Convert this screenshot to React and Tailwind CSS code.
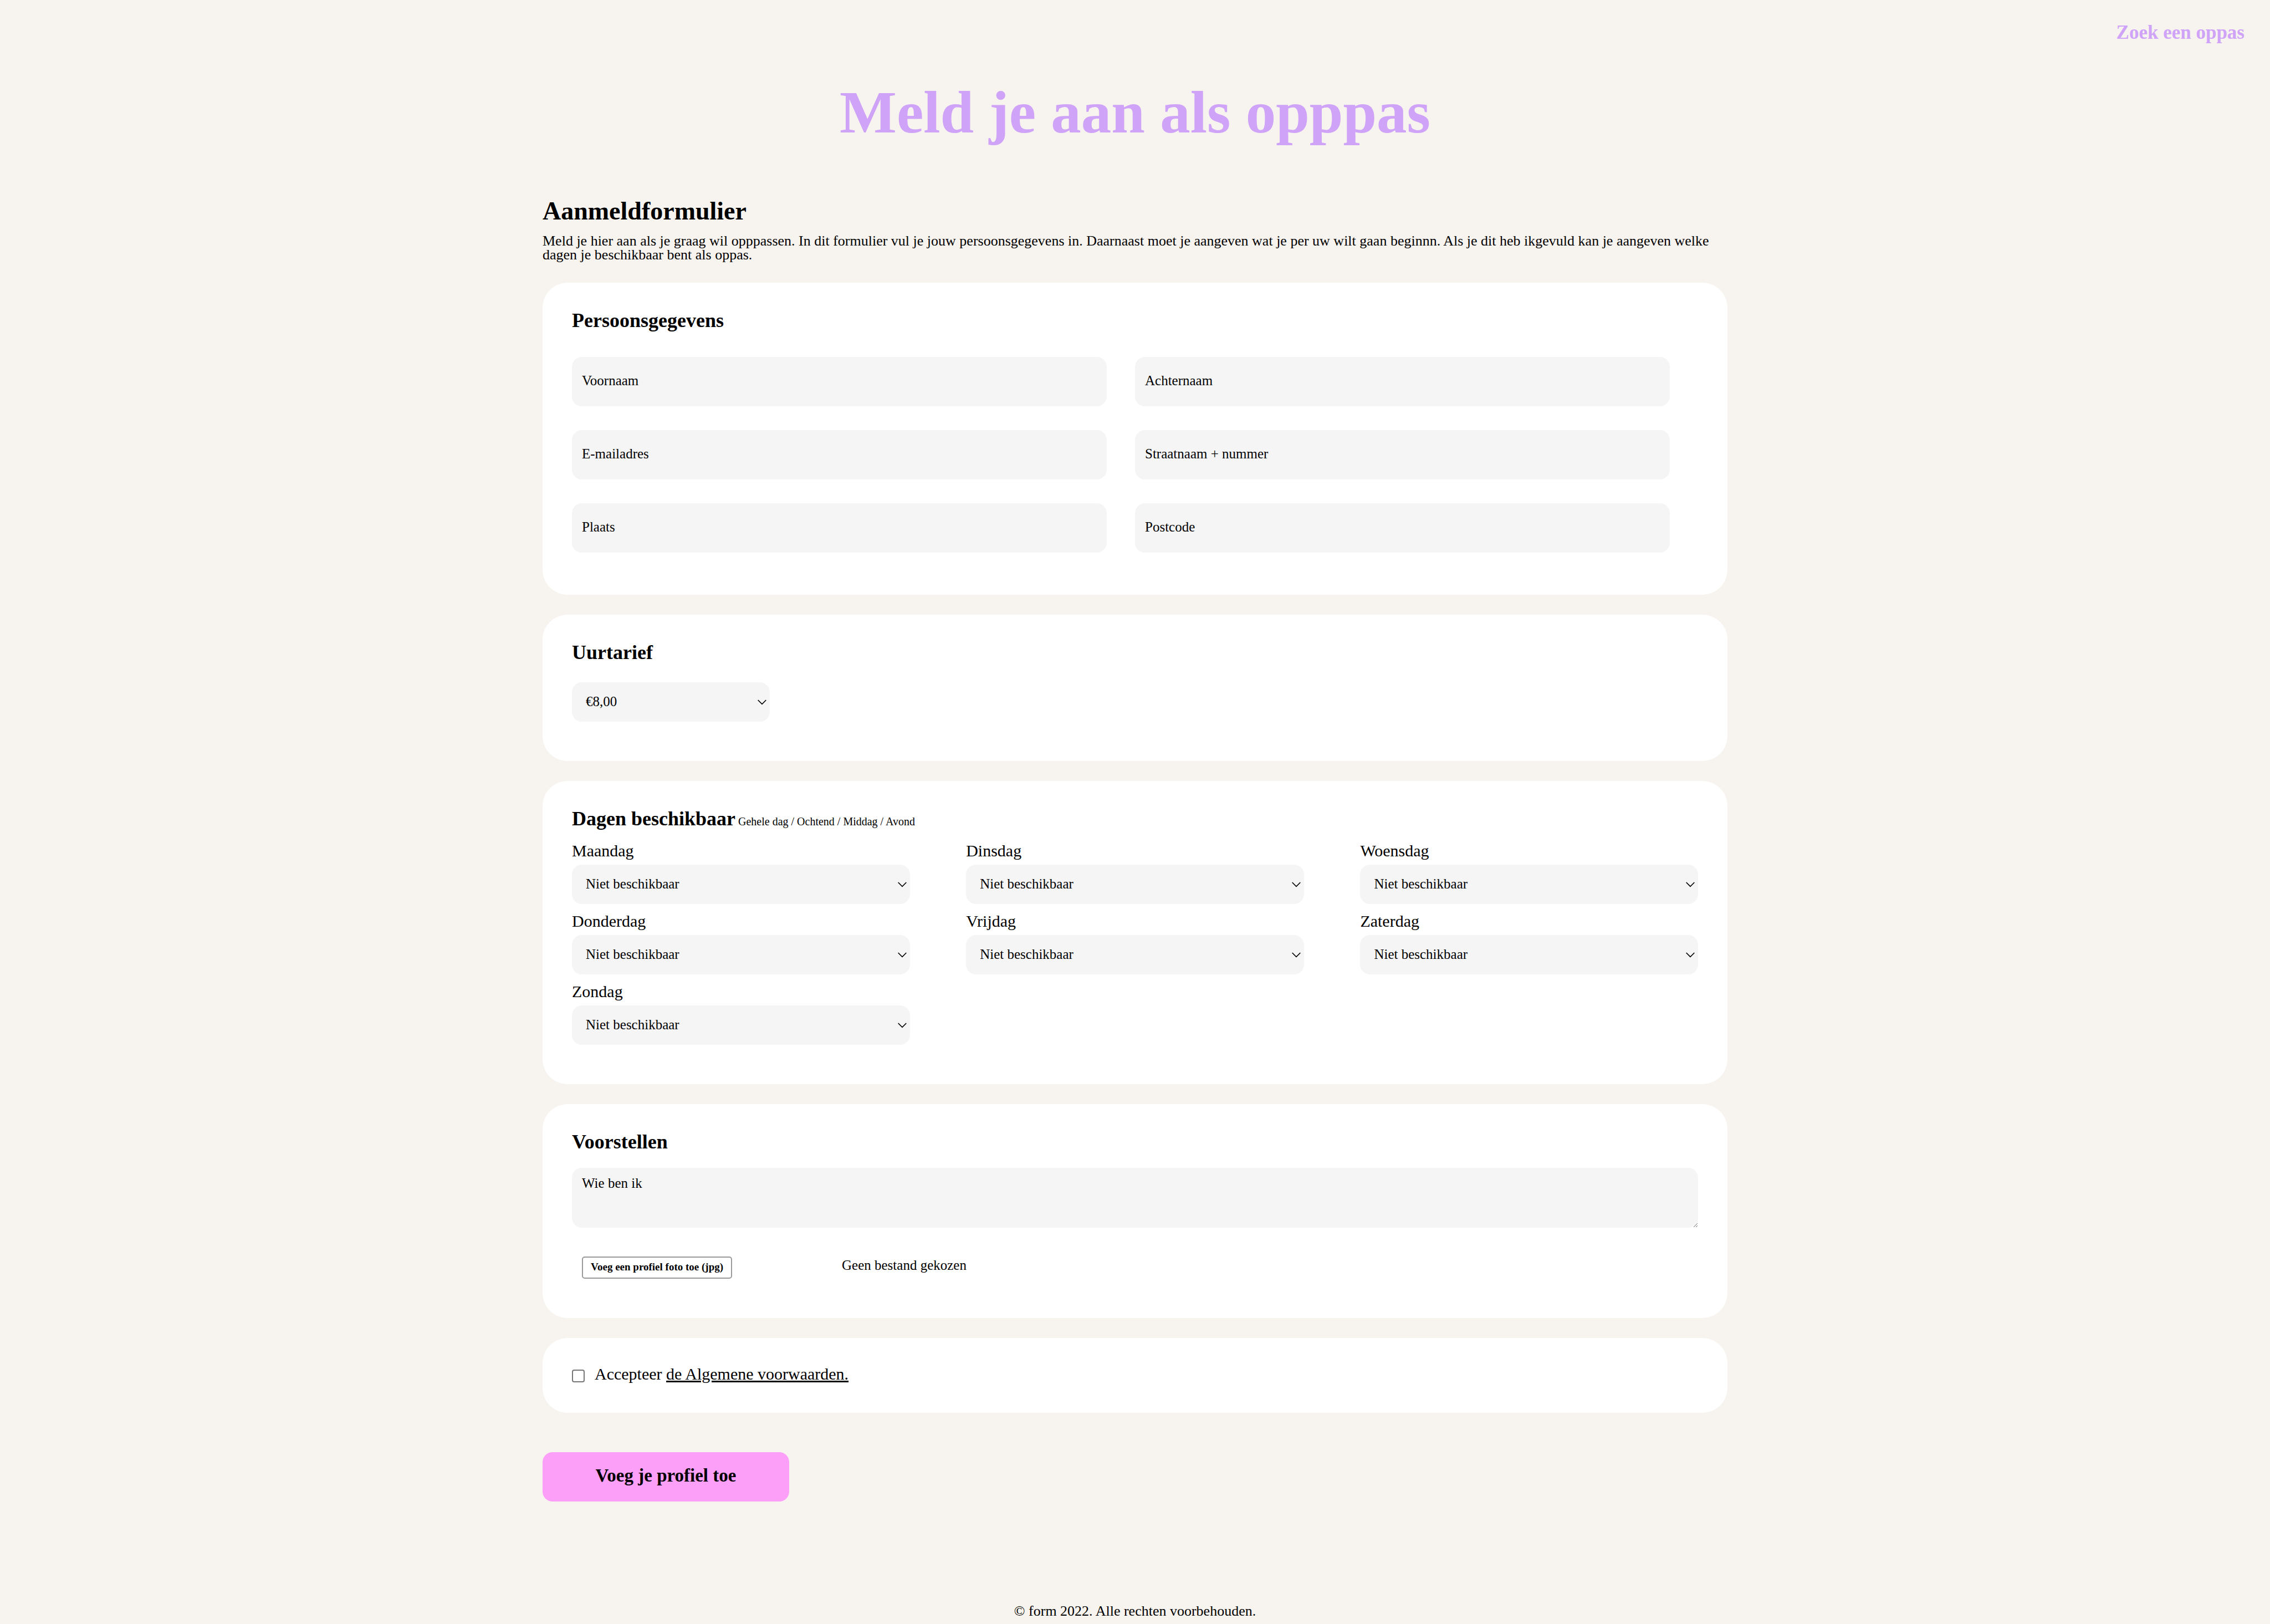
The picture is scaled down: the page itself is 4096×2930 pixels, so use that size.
import React from "react";

const personalFields = [
  { id: "voornaam", label: "Voornaam", type: "text" },
  { id: "achternaam", label: "Achternaam", type: "text" },
  { id: "email", label: "E-mailadres", type: "email" },
  { id: "straat", label: "Straatnaam + nummer", type: "text" },
  { id: "plaats", label: "Plaats", type: "text" },
  { id: "postcode", label: "Postcode", type: "text" },
];

const days = ["Maandag", "Dinsdag", "Woensdag", "Donderdag", "Vrijdag", "Zaterdag", "Zondag"];
const availability = ["Niet beschikbaar", "Gehele dag", "Ochtend", "Middag", "Avond"];
const rates = ["€8,00", "€9,00", "€10,00", "€11,00", "€12,00"];

function Card({ children, className = "pt-12 pb-[71px]" }) {
  return <section className={`rounded-[45px] bg-white px-[53px] ${className}`}>{children}</section>;
}

function CardTitle({ children }) {
  return <h3 className="text-[36px] leading-10 font-bold">{children}</h3>;
}

function Select({ id, options, ...rest }) {
  return (
    <div className="relative w-full">
      <select
        id={id}
        className="block h-[71px] w-full appearance-none rounded-[18px] bg-[#f5f5f5] pr-10 pb-[2px] pl-[25px] text-[25px]"
        {...rest}
      >
        {options.map((option) => (
          <option key={option}>{option}</option>
        ))}
      </select>
      <svg
        viewBox="0 0 16 10"
        className="pointer-events-none absolute top-[31px] right-[6px] h-[10px] w-4"
        fill="none"
        stroke="currentColor"
        strokeWidth="1.7"
        aria-hidden="true"
      >
        <path d="M0.7 1l7.3 7.3L15.3 1" />
      </svg>
    </div>
  );
}

export default function App() {
  return (
    <div className="flex min-h-screen flex-col bg-[#f7f3ee] font-['Liberation_Serif',serif] text-black">
      <nav className="flex justify-end pt-[39px] pr-[46px]">
        <a href="#zoeken" className="text-[35px] leading-10 font-bold text-[#cfa3f7]">
          Zoek een oppas
        </a>
      </nav>

      <h1 className="mt-[69px] text-center text-[109px] leading-[110px] font-bold text-[#cfa3f7]">
        Meld je aan als opppas
      </h1>

      <main className="mx-auto mt-[100px] w-full max-w-[2138px]">
        <h2 className="text-[46px] leading-[46px] font-bold">Aanmeldformulier</h2>
        <p className="mt-[18px] text-[26px] leading-[25px]">
          Meld je hier aan als je graag wil opppassen. In dit formulier vul je jouw persoonsgegevens in. Daarnaast moet
          je aangeven wat je per uw wilt gaan beginnn. Als je dit heb ikgevuld kan je aangeven welke dagen je
          beschikbaar bent als oppas.
        </p>

        <form className="mt-[38px]" onSubmit={(event) => event.preventDefault()}>
          <div className="flex flex-col gap-9">
            <Card className="pt-12 pb-[76px]">
              <CardTitle>Persoonsgegevens</CardTitle>
              <div className="mt-[46px] grid grid-cols-2 gap-y-[43px]">
                {personalFields.map(({ id, label, type }) => (
                  <input
                    key={id}
                    id={id}
                    type={type}
                    aria-label={label}
                    placeholder={label}
                    className="h-[89px] w-[95%] rounded-[18px] bg-[#f5f5f5] px-[18px] pb-1 text-[25px] placeholder:text-black"
                  />
                ))}
              </div>
            </Card>

            <Card>
              <CardTitle>Uurtarief</CardTitle>
              <div className="mt-[34px] w-[357px]">
                <Select id="uurtarief" options={rates} aria-label="Uurtarief" />
              </div>
            </Card>

            <Card>
              <CardTitle>
                Dagen beschikbaar
                <small className="text-[20px] leading-none font-normal"> Gehele dag / Ochtend / Middag / Avond</small>
              </CardTitle>
              <div className="mt-[23px] grid grid-cols-3 gap-x-[5%] gap-y-4">
                {days.map((day) => (
                  <div key={day} className="flex flex-col gap-[10px]">
                    <label htmlFor={day} className="text-[30px] leading-[30px]">
                      {day}
                    </label>
                    <Select id={day} options={availability} />
                  </div>
                ))}
              </div>
            </Card>

            <Card>
              <CardTitle>Voorstellen</CardTitle>
              <textarea
                aria-label="Wie ben ik"
                placeholder="Wie ben ik"
                className="mt-[27px] block h-[108px] w-full rounded-[18px] bg-[#f5f5f5] px-[18px] pt-[14px] text-[25px] leading-7 placeholder:text-black"
              />
              <div className="mt-[52px] flex items-center gap-[198px] pl-[18px]">
                <label
                  htmlFor="foto"
                  className="flex h-10 cursor-pointer items-center rounded-[5px] border-2 border-[#999] px-[14px] pb-[2px] text-[19px] font-bold"
                >
                  Voeg een profiel foto toe (jpg)
                </label>
                <input id="foto" type="file" accept="image/jpeg" className="sr-only" />
                <span className="pb-2 text-[25px] leading-8">Geen bestand gekozen</span>
              </div>
            </Card>

            <Card className="pt-[50px] pb-[55px]">
              <div className="flex items-end gap-[18px] text-[30px] leading-[30px]">
                <input
                  id="voorwaarden"
                  type="checkbox"
                  className="size-[23px] appearance-none rounded-[4px] border-2 border-[#767676] bg-white checked:bg-[#cfa3f7]"
                />
                <label htmlFor="voorwaarden">
                  Accepteer{" "}
                  <a href="#voorwaarden" className="underline decoration-[3px] underline-offset-2">
                    de Algemene voorwaarden.
                  </a>
                </label>
              </div>
            </Card>
          </div>

          <button
            type="submit"
            className="mt-[71px] h-[89px] w-[445px] rounded-[18px] bg-[#fc9ff8] pb-1 text-[33px] font-bold"
          >
            Voeg je profiel toe
          </button>
        </form>
      </main>

      <footer className="mt-auto pb-2 text-center text-[26px] leading-[30px]">
        © form 2022. Alle rechten voorbehouden.
      </footer>
    </div>
  );
}
